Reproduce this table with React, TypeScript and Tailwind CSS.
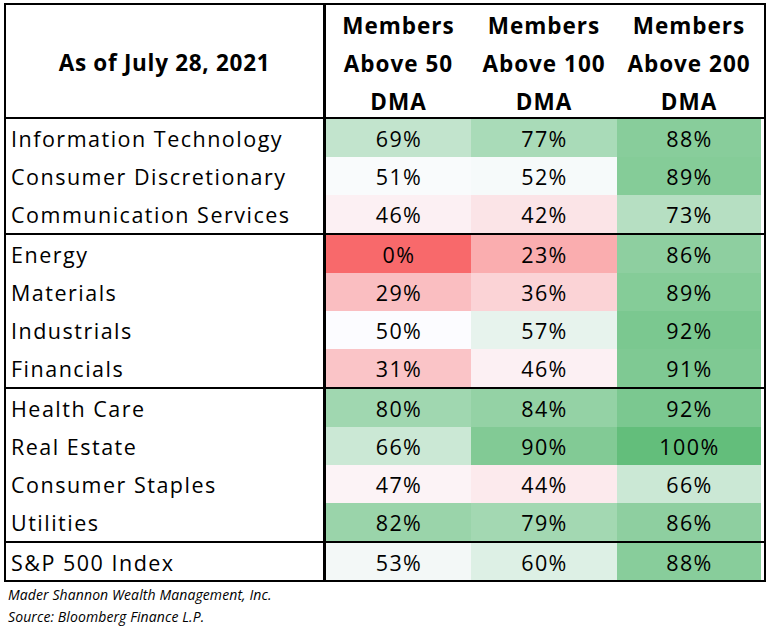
import React from 'react';

type Row = { name: string; cells: [string, string][] };

// colours follow a red / white / green scale with 50% as the white point
const groups: Row[][] = [
  [
    { name: 'Information Technology', cells: [['69%', 'bg-[#C2E4CD]'], ['77%', 'bg-[#A9DBB8]'], ['88%', 'bg-[#88CD9B]']] },
    { name: 'Consumer Discretionary', cells: [['51%', 'bg-[#F9FBFC]'], ['52%', 'bg-[#F6FAFA]'], ['89%', 'bg-[#85CC98]']] },
    { name: 'Communication Services', cells: [['46%', 'bg-[#FCF0F3]'], ['42%', 'bg-[#FBE4E7]'], ['73%', 'bg-[#B6DFC2]']] },
  ],
  [
    { name: 'Energy', cells: [['0%', 'bg-[#F8696B]'], ['23%', 'bg-[#FAADAF]'], ['86%', 'bg-[#8ECFA0]']] },
    { name: 'Materials', cells: [['29%', 'bg-[#FABEC1]'], ['36%', 'bg-[#FBD3D6]'], ['89%', 'bg-[#85CC98]']] },
    { name: 'Industrials', cells: [['50%', 'bg-[#FCFCFF]'], ['57%', 'bg-[#E7F3ED]'], ['92%', 'bg-[#7BC890]']] },
    { name: 'Financials', cells: [['31%', 'bg-[#FAC4C7]'], ['46%', 'bg-[#FCF0F3]'], ['91%', 'bg-[#7FC993]']] },
  ],
  [
    { name: 'Health Care', cells: [['80%', 'bg-[#A0D7B0]'], ['84%', 'bg-[#94D2A5]'], ['92%', 'bg-[#7BC890]']] },
    { name: 'Real Estate', cells: [['66%', 'bg-[#CBE8D5]'], ['90%', 'bg-[#82CA95]'], ['100%', 'bg-[#63BE7B]']] },
    { name: 'Consumer Staples', cells: [['47%', 'bg-[#FCF3F6]'], ['44%', 'bg-[#FCEAED]'], ['66%', 'bg-[#CBE8D5]']] },
    { name: 'Utilities', cells: [['82%', 'bg-[#9AD4AA]'], ['79%', 'bg-[#A3D8B2]'], ['86%', 'bg-[#8ECFA0]']] },
  ],
  [
    { name: 'S&P 500 Index', cells: [['53%', 'bg-[#F3F8F7]'], ['60%', 'bg-[#DDF0E5]'], ['88%', 'bg-[#88CD9B]']] },
  ],
];

const colWidths = ['w-[145px]', 'w-[146px]', 'w-[144px]'];
const headers = ['50', '100', '200'];

const DataRow = ({ row, h }: { row: Row; h: string }) => (
  <div className={`flex ${h}`}>
    <div className="w-[320px] border-r-[3px] border-black flex items-center pl-[5px] pt-[3px] text-[21.5px] tracking-[1.5px]">
      {row.name}
    </div>
    {row.cells.map(([v, bg], i) => (
      <div key={i} className={`${colWidths[i]} ${bg} flex items-center justify-center pl-[1px] pt-[3px] text-[21.5px] tracking-[1.4px]`}>
        {v}
      </div>
    ))}
  </div>
);

export default function App() {
  return (
    <div className="bg-white w-[771px] h-[628px] pl-[4px] pt-[3px] text-black font-['Open_Sans',sans-serif]">
      <div className="w-[762px] border-2 border-black">
        <div className="flex h-[114px] border-b-2 border-black">
          <div className="w-[320px] border-r-[3px] border-black flex items-center justify-center pt-[4px] font-bold text-[22.5px] tracking-[0.7px]">
            As of July 28, 2021
          </div>
          {headers.map((n, i) => (
            <div key={n} className={`${colWidths[i]} flex flex-col items-center justify-center pt-[5px] font-bold text-[22.5px] tracking-[1px] leading-[38px]`}>
              <span>Members</span>
              <span>Above {n}</span>
              <span>DMA</span>
            </div>
          ))}
        </div>
        {groups.map((g, gi) => (
          <div key={gi} className={gi < groups.length - 1 ? 'border-b-2 border-black' : ''}>
            {g.map((r) => (
              <DataRow key={r.name} row={r} h={gi === 3 ? 'h-[37px]' : 'h-[38px]'} />
            ))}
          </div>
        ))}
      </div>
      <div className="pl-[4px] pt-[2px] italic text-[14px] tracking-[0.1px] leading-[22px]">
        <div>Mader Shannon Wealth Management, Inc.</div>
        <div>Source: Bloomberg Finance L.P.</div>
      </div>
    </div>
  );
}
